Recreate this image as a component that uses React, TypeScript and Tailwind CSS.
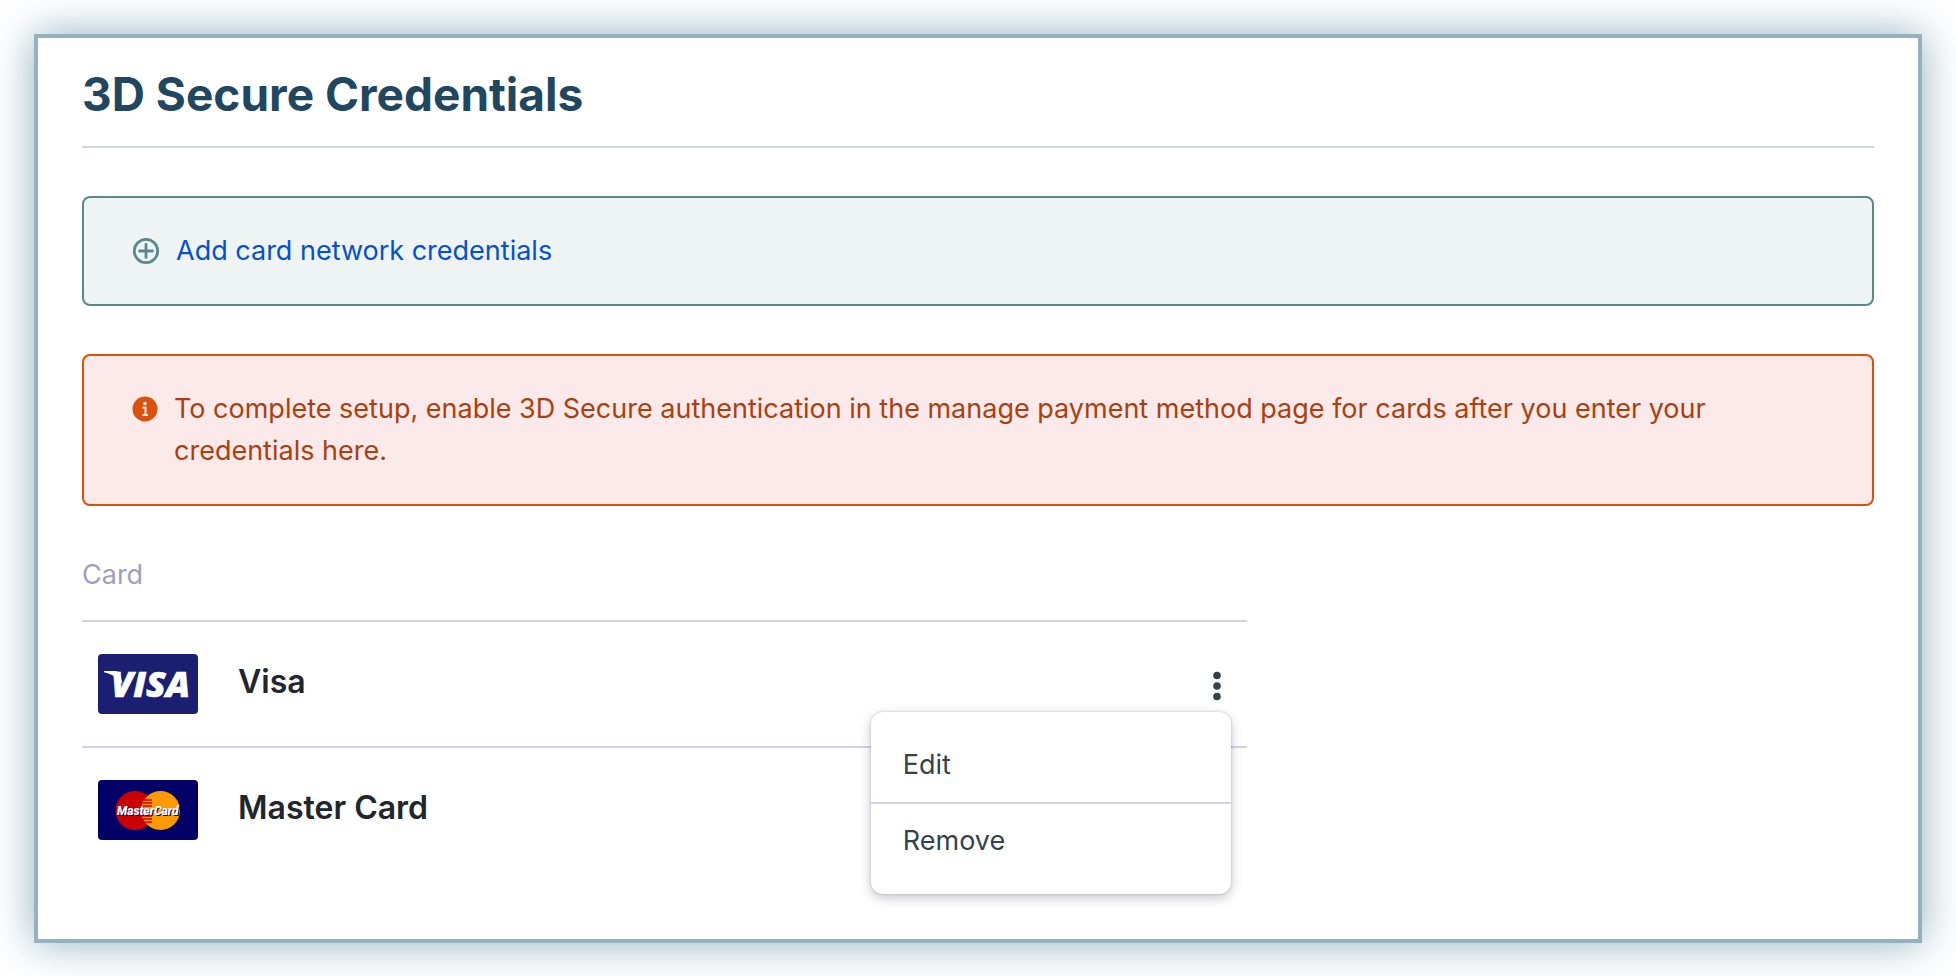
import { useState } from "react";

interface CardNetwork {
  id: string;
  name: string;
  logo: React.ReactNode;
}

function VisaLogo() {
  return (
    <svg viewBox="0 0 100 60" className="h-[60px] w-[100px]" aria-hidden="true">
      <rect width="100" height="60" rx="4" fill="#1a1f71" />
      <path
        d="M6 17h11c3 0 4.500 1.200 5.200 3.800l2.500 9.500C19 23.500 14 20 6 18.200z"
        fill="#fff"
      />
      <text
        x="13"
        y="43"
        fontFamily="Open Sans, sans-serif"
        fontSize="36"
        fontWeight="800"
        fontStyle="italic"
        fill="#fff"
        stroke="#fff"
        strokeWidth="0.6"
      >
        VISA
      </text>
    </svg>
  );
}

function MasterCardLogo() {
  return (
    <svg viewBox="0 0 100 60" className="h-[60px] w-[100px]" aria-hidden="true">
      <rect width="100" height="60" rx="4" fill="#000066" />
      <circle cx="37" cy="30.5" r="19.5" fill="#cc0000" />
      <circle cx="62.5" cy="30.5" r="19.5" fill="#ff9900" />
      <path
        d="M46 20h8M45 23h9M44 26h10M44 36h10M45 39h9M46 42h8"
        stroke="#cc0000"
        strokeWidth="1.3"
      />
      <g
        fontFamily="Roboto, sans-serif"
        fontSize="12"
        fontWeight="700"
        fontStyle="italic"
      >
        <text x="20" y="36" fill="#000066">
          MasterCard
        </text>
        <text x="19" y="35" fill="#fff" stroke="#fff" strokeWidth="0.2">
          MasterCard
        </text>
      </g>
    </svg>
  );
}

const networks: CardNetwork[] = [
  { id: "visa", name: "Visa", logo: <VisaLogo /> },
  { id: "mastercard", name: "Master Card", logo: <MasterCardLogo /> },
];

function CardMenu() {
  return (
    <div
      role="menu"
      className="absolute top-[calc(50%+28px)] right-4 z-10 w-[360px] rounded-xl bg-white py-6 text-[27px] leading-[42px] text-[#36424a] shadow-[0_4px_12px_rgba(30,30,60,0.25),0_0_3px_rgba(30,30,60,0.2)]"
    >
      <button
        type="button"
        role="menuitem"
        className="block w-full border-b-2 border-[#d2d2e8] px-8 pt-2 pb-4 text-left"
      >
        Edit
      </button>
      <button
        type="button"
        role="menuitem"
        className="block w-full px-8 pt-4 pb-2 text-left"
      >
        Remove
      </button>
    </div>
  );
}

function App() {
  const [openId, setOpenId] = useState<string | null>("visa");

  return (
    <div className="bg-white p-[34px] font-['Inter',sans-serif]">
      <main className="border-4 border-[#94b1c0] bg-white px-11 pt-7 pb-[68px] shadow-[0_0_40px_rgba(35,99,127,0.5)]">
        <h1 className="border-b-2 border-[#d2d5e9] pb-6 text-[46px] leading-[56px] font-bold text-[#1f4860]">
          3D Secure Credentials
        </h1>

        <div className="mt-12 flex items-center gap-4 rounded-lg border-2 border-[#59898c] bg-[#eef4f4] px-12 py-8">
          <svg
            viewBox="0 0 28 28"
            className="size-7 text-[#59898c]"
            fill="none"
            stroke="currentColor"
            strokeWidth="2.8"
            strokeLinecap="round"
            aria-hidden="true"
          >
            <circle cx="14" cy="14" r="11.7" />
            <path d="M14 7.500v13M7.500 14h13" />
          </svg>
          <a href="#add" className="text-[27px] leading-[42px] text-[#0550d0]">
            Add card network credentials
          </a>
        </div>

        <div
          role="alert"
          className="mt-12 flex gap-4 rounded-lg border-2 border-[#d9510c] bg-[#fce9e9] px-12 py-8"
        >
          <svg
            viewBox="0 0 26 26"
            className="mt-2 size-[26px] shrink-0"
            aria-hidden="true"
          >
            <circle cx="13" cy="13" r="12.5" fill="#d9510c" />
            <circle cx="13" cy="7.5" r="1.8" fill="#fce9e9" />
            <path
              d="M10.500 11.500h3v7.500M10.500 19h5.500"
              fill="none"
              stroke="#fce9e9"
              strokeWidth="2"
            />
          </svg>
          <p className="text-[27px] leading-[42px] text-[#ab400e]">
            To complete setup, enable 3D Secure authentication in the manage
            payment method page for cards after you enter your credentials here.
          </p>
        </div>

        <table className="mt-12 w-[65%] border-collapse text-left">
          <thead>
            <tr className="border-b-2 border-[#d2d2e8]">
              <th
                colSpan={3}
                className="pb-6 text-[27px] leading-[42px] font-normal text-[#9f9fc2]"
              >
                Card
              </th>
            </tr>
          </thead>
          <tbody>
            {networks.map(({ id, name, logo }) => (
              <tr
                key={id}
                className="h-[126px] border-b-2 border-[#d2d2e8] last:h-[124px] last:border-b-0"
              >
                <td className="w-[156px] pl-4">{logo}</td>
                <td className="pb-1 text-[32px] leading-[42px] font-semibold text-[#20262c]">
                  {name}
                </td>
                <td className="relative w-15 pt-1">
                  {id === "visa" && (
                    <button
                      type="button"
                      aria-label="Card actions"
                      aria-expanded={openId === id}
                      onClick={() => setOpenId(openId === id ? null : id)}
                      className="flex h-10 w-15 items-center justify-center"
                    >
                      <svg
                        viewBox="0 0 8 30"
                        className="h-[30px] w-2"
                        fill="#36424a"
                        aria-hidden="true"
                      >
                        <circle cx="4" cy="4.5" r="3.8" />
                        <circle cx="4" cy="15" r="3.8" />
                        <circle cx="4" cy="25.5" r="3.8" />
                      </svg>
                    </button>
                  )}
                  {openId === id && <CardMenu />}
                </td>
              </tr>
            ))}
          </tbody>
        </table>
      </main>
    </div>
  );
}

export default App;
